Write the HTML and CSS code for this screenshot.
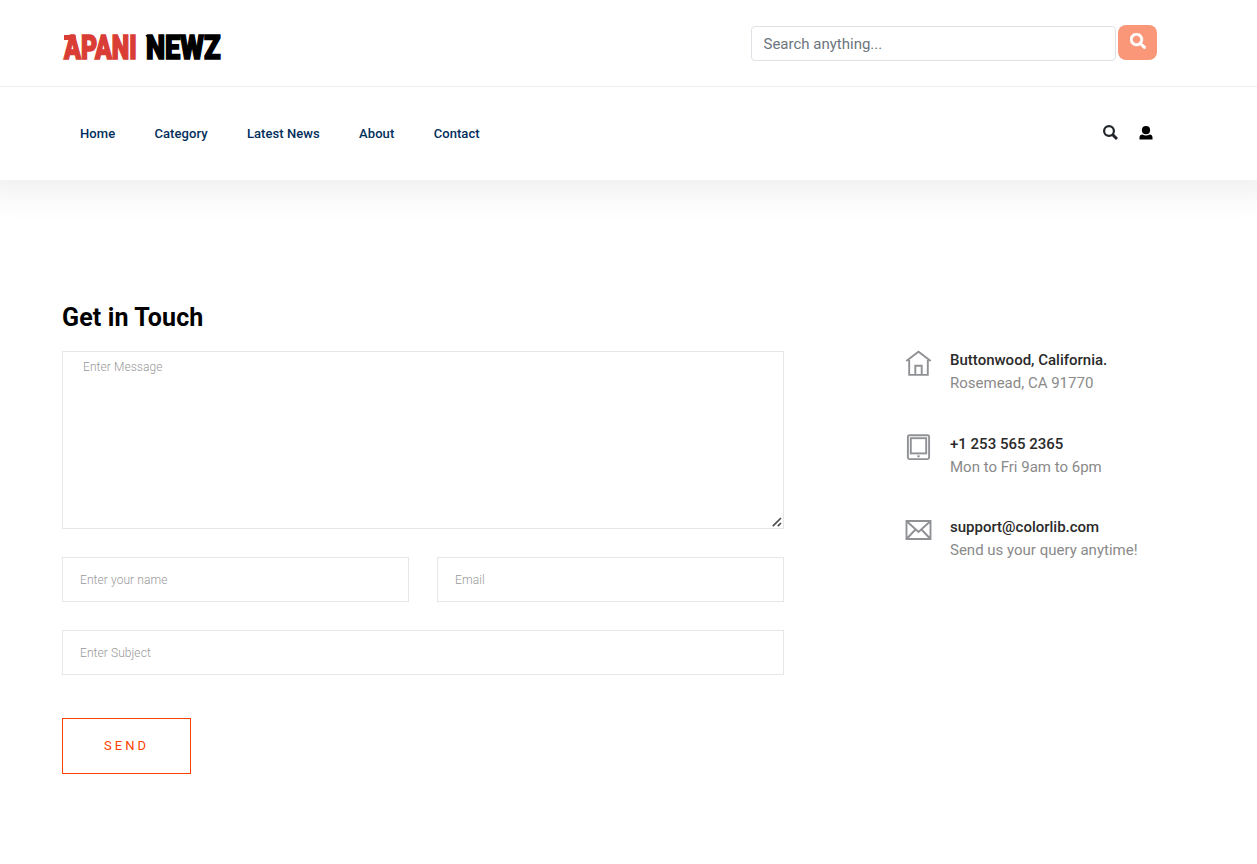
FILE: index.html
```html
<!DOCTYPE html>
<html lang="en">
<head>
<meta charset="utf-8">
<title>Apani Newz - Contact</title>
<link rel="stylesheet" href="styles.css">
</head>
<body>
<header class="header">
  <div class="topbar">
    <a class="logo" href="#">
      <span class="logo-word logo-red">APANI</span>
      <span class="logo-word logo-black">NEWZ</span>
    </a>
    <form class="search">
      <input class="search-input" type="text" placeholder="Search anything...">
      <button class="search-button" type="button" aria-label="Search">
        <svg width="16" height="16" viewBox="0 0 512 512"><path fill="currentColor" stroke="currentColor" stroke-width="14" d="M505 442.700L405.300 343c-4.500-4.500-10.600-7-17-7H372c27.600-35.300 44-79.700 44-128C416 93.100 322.900 0 208 0S0 93.100 0 208s93.100 208 208 208c48.300 0 92.700-16.400 128-44v16.300c0 6.400 2.500 12.500 7 17l99.700 99.700c9.400 9.400 24.600 9.400 33.900 0l28.300-28.300c9.400-9.400 9.400-24.600.1-34zM208 336c-70.700 0-128-57.200-128-128 0-70.700 57.200-128 128-128 70.700 0 128 57.200 128 128 0 70.700-57.200 128-128 128z"/></svg>
      </button>
    </form>
  </div>
  <div class="navbar">
    <nav class="menu">
      <a href="#">Home</a>
      <a href="#">Category</a>
      <a href="#">Latest News</a>
      <a href="#">About</a>
      <a href="#">Contact</a>
    </nav>
    <div class="tools">
      <svg class="tool-search" width="15" height="15" viewBox="0 0 15 15"><circle cx="6" cy="6" r="4.900" fill="none" stroke="currentColor" stroke-width="2.200"/><path d="M9.600 9.600l4.400 4.400" stroke="currentColor" stroke-width="2.900"/></svg>
      <svg class="tool-user" width="14" height="14" viewBox="0 0 14 14"><circle cx="7" cy="4.200" r="4.100"/><path d="M.5 13.500v-2.300C.5 9.500 1.700 8.600 3.300 8.400c2.200 1.500 5.200 1.500 7.400 0 1.600.2 2.800 1.100 2.800 2.800v2.300z"/></svg>
    </div>
  </div>
</header>
<main class="contact">
  <section class="contact-main">
    <h2 class="title">Get in Touch</h2>
    <form class="contact-form">
      <div class="message-wrap">
        <textarea class="field message" placeholder="Enter Message"></textarea>
        <svg class="grip" width="10" height="10" viewBox="0 0 10 10"><path d="M.8 9.200L9 1M5.800 9.200L9 6"/></svg>
      </div>
      <input class="field" type="text" placeholder="Enter your name">
      <input class="field" type="text" placeholder="Email">
      <input class="field subject" type="text" placeholder="Enter Subject">
      <button class="send" type="button">SEND</button>
    </form>
  </section>
  <aside class="info">
    <div class="info-row">
      <svg class="info-icon" width="27" height="27" viewBox="0 0 27 27"><path d="M1.300 11L13.500 1.700 25.700 11M4.200 10v14.900h18.600V10M10.300 24.500V15.700h6.400v8.800"/></svg>
      <div><h3>Buttonwood, California.</h3><p>Rosemead, CA 91770</p></div>
    </div>
    <div class="info-row">
      <svg class="info-icon" width="27" height="27" viewBox="0 0 27 27"><rect x="2.900" y="1.300" width="21.200" height="23.800" rx="1.500"/><rect x="5.800" y="4.200" width="15.400" height="15.200"/><path d="M12.300 22.300h2.400"/></svg>
      <div><h3>+1 253 565 2365</h3><p>Mon to Fri 9am to 6pm</p></div>
    </div>
    <div class="info-row">
      <svg class="info-icon" width="27" height="27" viewBox="0 0 27 27"><path d="M1.500 4h24v18h-24zM2 4.500l11.500 10.400L25 4.500M2 21.500l8.500-9M25 21.500l-8.500-9"/></svg>
      <div><h3>support@colorlib.com</h3><p>Send us your query anytime!</p></div>
    </div>
  </aside>
</main>
</body>
</html>
```
FILE: styles.css
```css
* { box-sizing: border-box; }
body { margin: 0; font-family: Roboto, sans-serif; background: #fff; color: #000; overflow-x: hidden; }
a { text-decoration: none; color: inherit; }
h2, h3, p { margin: 0; }
.header { height: 180px; background: #fff; box-shadow: 0 0 28px 16px rgba(0, 0, 0, .06); }
.topbar { height: 87px; padding: 25px 100px 0 63px; border-bottom: 1px solid #eee; display: flex; justify-content: space-between; align-items: flex-start; }
.logo { display: flex; gap: 9px; padding: 2px 0 0 1px; }
.logo-word { position: relative; font-weight: 900; font-size: 34px; line-height: 41px; white-space: nowrap; -webkit-text-stroke: 1.600px currentColor; transform-origin: 0 50%; }
.logo-word::before { content: ""; position: absolute; left: 0; top: 8px; height: 5px; background: currentColor; }
.logo-red { color: #d93d35; transform: scaleX(.73); width: 104px; margin-right: -31px; }
.logo-red::before { width: 16px; }
.logo-black { color: #000; transform: scaleX(.8); width: 92px; }
.logo-black::before { left: -1px; width: 10px; clip-path: polygon(0 0, 100% 0, 100% 100%, 45% 100%); }
.search { display: flex; gap: 2px; }
.search-input { width: 365px; height: 35px; margin-top: 1px; padding: 0 11.500px; border: 1px solid #dee2e6; border-radius: 4px; font: 400 15px Roboto, sans-serif; }
.search-input::placeholder { color: #6c757d; opacity: 1; }
.search-button { width: 39px; height: 35px; padding: 0 0 3px; border: 0; border-radius: 8px; background: #fa9778; color: #fff; display: flex; align-items: center; justify-content: center; }
.navbar { height: 93px; padding: 0 104px 0 80px; display: flex; justify-content: space-between; align-items: center; }
.menu { display: flex; gap: 39.300px; font-size: 13px; font-weight: 500; letter-spacing: .07px; line-height: 20px; color: #002e5b; }
.tools { display: flex; gap: 21px; align-items: center; padding-bottom: 2px; }
.tool-search { color: #212529; }
.contact { padding: 123px 0 0 62px; display: flex; gap: 121px; }
.contact-main { width: 722px; }
.title { font-size: 25px; line-height: 30px; font-weight: 700; letter-spacing: .13px; }
.contact-form { margin-top: 18px; display: grid; grid-template-columns: 1fr 1fr; column-gap: 28px; }
.field { width: 100%; height: 45px; padding: 0 17px; border: 1px solid #e5e6e9; border-radius: 0; background: #fff; font: 300 12px/20px Roboto, sans-serif; letter-spacing: .08px; outline: 0; }
.field::placeholder { color: #999; opacity: 1; }
.message-wrap { position: relative; grid-column: 1 / -1; margin-bottom: 28px; }
.message { display: block; height: 178px; padding: 5px 20px; resize: none; }
.grip { position: absolute; right: 2px; bottom: 2px; fill: none; stroke: #4d4d4d; stroke-width: 1.700; }
.subject { grid-column: 1 / -1; margin-top: 28px; }
.send { width: 129px; height: 56px; margin-top: 43px; padding: 0 0 2px; background: #fff; border: 1px solid #ff4200; color: #ff4200; font: 400 13px Roboto, sans-serif; letter-spacing: 3px; }
.info { padding-top: 45px; display: flex; flex-direction: column; gap: 37.500px; }
.info-row { display: flex; gap: 18px; height: 46px; }
.info-icon { fill: none; stroke: #8f9195; stroke-width: 1.900; margin-top: 2px; }
.info-row div { padding-top: 1px; }
.info h3 { font-size: 15px; line-height: 23px; font-weight: 500; color: #2a2a2a; }
.info p { font-size: 15px; line-height: 23px; color: #8a8a8a; }
```
